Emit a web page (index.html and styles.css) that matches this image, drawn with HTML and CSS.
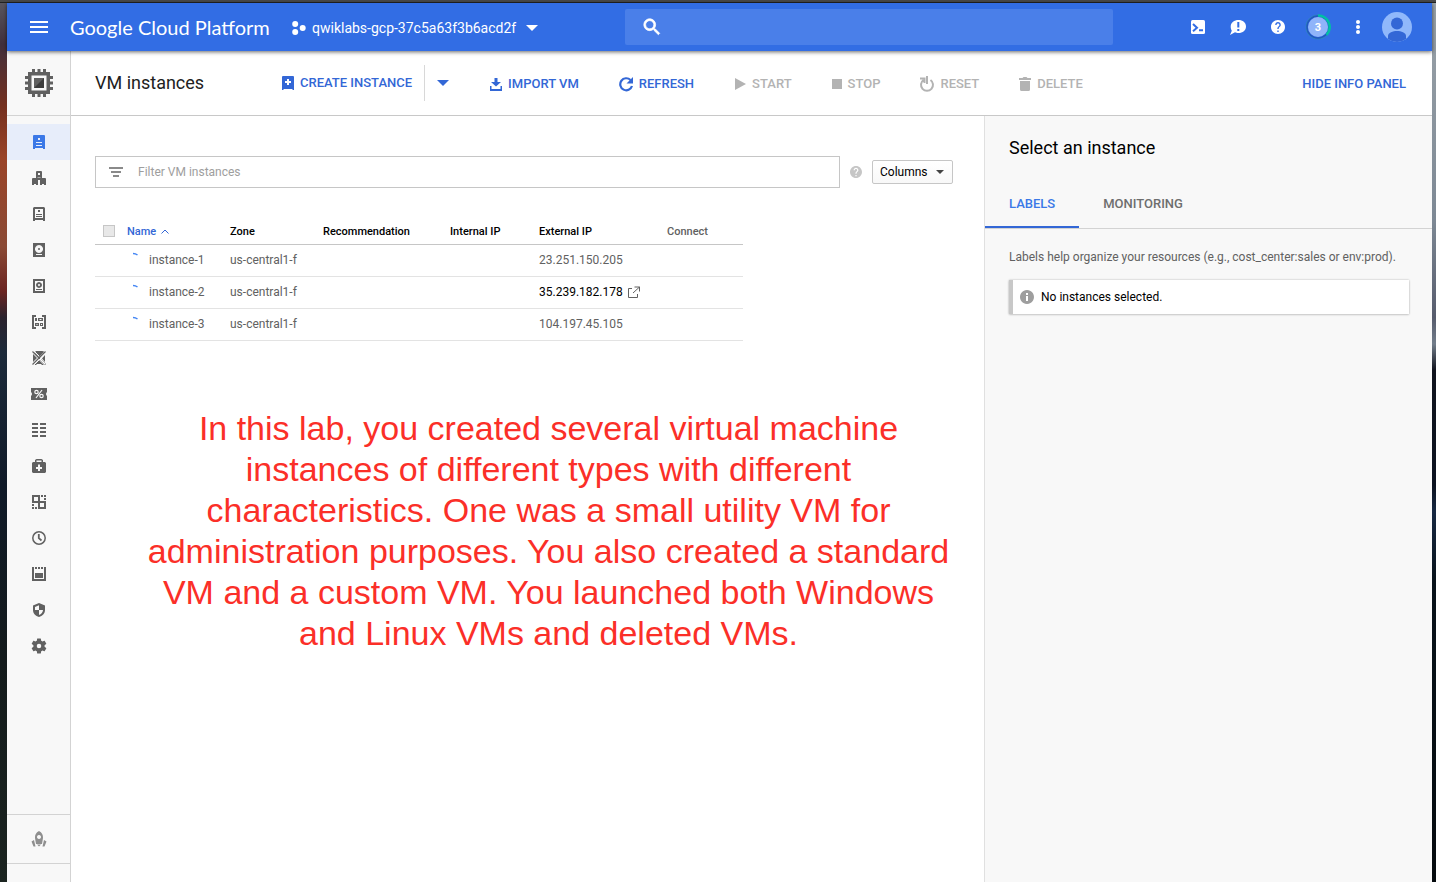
FILE: index.html
```html
<!DOCTYPE html>
<html lang="en">
<head>
<meta charset="utf-8">
<title>VM instances - Google Cloud Platform</title>
<link rel="stylesheet" href="styles.css">
</head>
<body>
<div class="window">
  <header class="topbar">
    <button class="icon-btn menu-btn" aria-label="Menu"><svg width="18" height="12" viewBox="0 0 18 12"><path d="M0 0h18v2H0zM0 5h18v2H0zM0 10h18v2H0z"/></svg></button>
    <a class="brand" href="#">Google Cloud Platform</a>
    <button class="project">
      <svg width="14" height="14" viewBox="0 0 14 14"><circle cx="3.2" cy="3" r="3"/><circle cx="3.2" cy="11" r="3"/><circle cx="10.7" cy="7" r="3"/></svg>
      <span>qwiklabs-gcp-37c5a63f3b6acd2f</span>
      <svg class="project-caret" width="12" height="6" viewBox="0 0 12 6"><path d="M0 0h12L6 6z"/></svg>
    </button>
    <label class="search" aria-label="Search">
      <svg width="20" height="20" viewBox="1 1 22 22"><path stroke="#fff" stroke-width=".8" d="M15.500 14h-.79l-.28-.27C15.410 12.590 16 11.110 16 9.500 16 5.910 13.090 3 9.500 3S3 5.910 3 9.500 5.910 16 9.500 16c1.610 0 3.090-.59 4.230-1.570l.27.28v.79l5 4.990L20.490 19l-4.990-5zm-6 0C7.010 14 5 11.990 5 9.500S7.010 5 9.500 5 14 7.010 14 9.500 11.990 14 9.500 14z"/></svg>
      <input type="text">
    </label>
    <div class="top-actions">
      <button class="icon-btn" aria-label="Cloud Shell"><svg width="14" height="14" viewBox="0 0 14 14"><rect width="14" height="14" rx="1.500"/><path class="cut" d="M2 4l4 3.800-4 3.500M8 10.200h4"/></svg></button>
      <button class="icon-btn" aria-label="Feedback"><svg width="16" height="16" viewBox="0 0 16 16"><path d="M8.500 1C12.700 1 16 3.600 16 7.500S12.700 14 8.500 14c-1.500 0-2.500-.3-3.500-.8L0 16l1.800-4.200C1 10.600.7 9.300.7 7.500.7 3.600 4.300 1 8.500 1z"/><path class="cut" d="M8.300 3v5.500M8.300 10v2"/></svg></button>
      <button class="icon-btn" aria-label="Help"><svg width="14" height="14" viewBox="2 2 20 20"><path d="M12 2C6.480 2 2 6.480 2 12s4.480 10 10 10 10-4.480 10-10S17.520 2 12 2zm1 17h-2v-2h2v2zm2.070-7.750l-.9.920C13.450 12.900 13 13.500 13 15h-2v-.5c0-1.100.45-2.100 1.170-2.830l1.240-1.260c.37-.36.59-.86.59-1.410 0-1.100-.9-2-2-2s-2 .9-2 2H8c0-2.210 1.790-4 4-4s4 1.790 4 4c0 .88-.36 1.680-.93 2.250z"/></svg></button>
      <button class="icon-btn notice" aria-label="Notifications"><svg width="26" height="26" viewBox="0 0 26 26"><circle cx="13" cy="13" r="12" fill="none" stroke="#2b8db8" stroke-width="1"/><circle cx="13" cy="13" r="11" fill="none" stroke="#2358bd" stroke-width="1.500"/><path d="M13 1.500a11.500 11.500 0 0 1 8.500 19.300" fill="none" stroke="#00bfa5" stroke-width="2.500"/><circle cx="13" cy="13" r="10" fill="#8fb4fa"/></svg><span>3</span></button>
      <button class="icon-btn" aria-label="More"><svg width="4" height="14" viewBox="0 0 4 14"><circle cx="2" cy="2" r="2"/><circle cx="2" cy="7" r="2"/><circle cx="2" cy="12" r="2"/></svg></button>
      <button class="icon-btn avatar" aria-label="Account"><svg width="30" height="30" viewBox="0 0 30 30"><circle cx="15" cy="15" r="15" fill="#90b8fb"/><circle cx="15" cy="11.500" r="6" fill="#3367d6"/><path d="M6 27v-3c0-3.500 5-5 9-5s9 1.500 9 5v3a15 15 0 0 1-18 0z" fill="#3367d6"/></svg></button>
    </div>
  </header>

  <div class="body">
    <aside class="sidebar">
      <a class="product" href="#" aria-label="Compute Engine"><svg width="30" height="30" viewBox="0 0 30 30"><path fill-rule="evenodd" d="M4 4h22v22H4zM7.500 7.500v15h15v-15z"/><path d="M8 1h3v4H8zM13.500 1h3v4h-3zM19 1h3v4h-3zM8 25h3v4H8zM13.500 25h3v4h-3zM19 25h3v4h-3zM1 8h4v3H1zM1 13.500h4v3H1zM1 19h4v3H1zM25 8h4v3h-4zM25 13.500h4v3h-4zM25 19h4v3h-4z"/><path d="M10 10h10v10H10z"/><path fill="#3d3d3d" d="M20 10v10H10z"/></svg></a>
      <nav class="nav">
        <a class="active" href="#" aria-label="VM instances"><svg width="16" height="16" viewBox="0 0 16 16"><path fill-rule="evenodd" d="M3 1h10q1 0 1 1v13h-2v-1H4v1H2V2q0-1 1-1zM7 4v2h2V4zM5 8v1h6V8zM5 11v1h6v-1z"/></svg></a>
        <a href="#" aria-label="Instance groups"><svg width="16" height="16" viewBox="0 0 16 16"><path fill-rule="evenodd" d="M6 1h4q1 0 1 1v6h3q1 0 1 1v6h-2v-1h-2v1H9v-5H7v5H5v-1H3v1H1V9q0-1 1-1h3V2q0-1 1-1zM7 3v2h2V3zM6.500 8h3V7.500h-3z"/></svg></a>
        <a href="#" aria-label="Instance templates"><svg width="16" height="16" viewBox="0 0 16 16"><path fill-rule="evenodd" d="M3 1h10l1 1v13h-2v-1H4v1H2V2zM4 3v9h8V3z"/><path d="M7 4h2v2H7zM5 8h6v1H5zM5 10h6v1H5z"/></svg></a>
        <a href="#" aria-label="Disks"><svg width="16" height="16" viewBox="0 0 16 16"><path fill-rule="evenodd" d="M2 1h12v14H2zM8 3a4 4 0 1 0 .01 0zM5 12v1h6v-1z"/><circle cx="8" cy="7" r="1"/></svg></a>
        <a href="#" aria-label="Snapshots"><svg width="16" height="16" viewBox="0 0 16 16"><path fill-rule="evenodd" d="M2 1h12v14H2zM4 3v10h8V3z"/><path fill-rule="evenodd" d="M8 4a3 3 0 1 1-.01 0zM8 6a1 1 0 1 0 .01 0z"/><path d="M5 11h6v1H5z"/></svg></a>
        <a href="#" aria-label="Images"><svg width="16" height="16" viewBox="0 0 16 16"><path d="M1 1h4v2H3v10h2v2H1zM11 1h4v14h-4v-2h2V3h-2z"/><path fill-rule="evenodd" d="M4 4h2v3H4zM7 4h5v3H7zM8.500 5v1h2V5zM4 9h4v3H4zM5.500 10v1h1v-1zM9 9h3v3H9zM10 10v1h1v-1z"/></svg></a>
        <a href="#" aria-label="TPUs"><svg width="16" height="16" viewBox="0 0 16 16"><path d="M5 1h6q2 0 2 1L8 7 3.500 2.500zM2 4l4 4-4 4zM14 5v7l-3-3.500zM3 15l5-5 5 5h-2l-1-1H6l-1 1z"/><path fill="none" stroke="#616161" stroke-width="1.200" d="M1.500 1.500l13 13M14.500 1.500l-13 13"/><path fill="none" stroke="#f8f8f8" d="M3 1l5 5M14 4L3 15M9 9l5 5"/></svg></a>
        <a href="#" aria-label="Committed use discounts"><svg width="16" height="12" viewBox="0 0 16 12"><path d="M0 0h16v4q-2 2 0 4v4H0V8q2-2 0-4z"/><g fill="none" stroke="#f8f8f8" stroke-width="1.200"><circle cx="5.500" cy="4" r="1.700"/><circle cx="10.500" cy="8" r="1.700"/><path d="M11 2L5 10"/></g></svg></a>
        <a href="#" aria-label="Metadata"><svg width="16" height="16" viewBox="0 0 16 16"><path d="M1 1h6v2H1zM9 1h6v2H9zM1 5h6v2H1zM9 5h6v2H9zM1 9h6v2H1zM9 9h6v2H9zM1 13h6v2H1zM9 13h6v2H9z"/></svg></a>
        <a href="#" aria-label="Health checks"><svg width="16" height="16" viewBox="0 0 16 16"><path fill-rule="evenodd" d="M4 4V2l1.500-1h5L12 2v2h2l1 1v9l-1 1H2l-1-1V5l1-1zM5.500 2.500V4h5V2.500zM7 6.500V9H5v2h2v2h2v-2h2V9H9V6.500z"/></svg></a>
        <a href="#" aria-label="Zones"><svg width="16" height="16" viewBox="0 0 16 16"><path fill-rule="evenodd" d="M1 1h8v6h6v8H7V9H1zM3 3v4h4V3zM9 9v4h4V9z"/><path d="M10 1h2v2h-2zM13 1h2v2h-2zM13 4h2v2h-2zM1 10h2v2H1zM1 13h2v2H1zM4 13h2v2H4z"/></svg></a>
        <a href="#" aria-label="Operations"><svg width="16" height="16" viewBox="0 0 16 16"><circle cx="8" cy="8" r="6.200" fill="none" stroke="#616161" stroke-width="1.500"/><path fill="none" stroke="#616161" stroke-width="1.800" d="M7.800 4v4.200l2.700 2.300"/></svg></a>
        <a href="#" aria-label="Quotas"><svg width="16" height="16" viewBox="0 0 16 16"><path d="M1 1h2v12h10V1h2v14H1zM4 1h2v2H4zM7 1h2v2H7zM10 1h2v2h-2zM4 7h8v5H4z"/></svg></a>
        <a href="#" aria-label="Security scans"><svg width="16" height="16" viewBox="0 0 16 16"><path fill-rule="evenodd" d="M8 1l6 2.500V8c0 3.500-2.600 6-6 7-3.400-1-6-3.500-6-7V3.500zM8 3.200L4 5v3h4v5c2.300-.8 4-2.800 4-5H8z"/></svg></a>
        <a href="#" aria-label="Settings"><svg width="18" height="18" viewBox="0 0 24 24"><path d="M19.430 12.980c.04-.32.07-.64.07-.98s-.03-.66-.07-.98l2.110-1.650c.19-.15.24-.42.12-.64l-2-3.460c-.12-.22-.39-.3-.61-.22l-2.490 1c-.52-.4-1.080-.73-1.690-.98l-.38-2.650A.488.488 0 0 0 14 2h-4c-.25 0-.46.18-.49.42l-.38 2.650c-.61.25-1.170.59-1.690.98l-2.490-1c-.23-.09-.49 0-.61.22l-2 3.460c-.13.22-.07.49.12.64l2.110 1.650c-.04.32-.07.65-.07.98s.03.66.07.98l-2.110 1.650c-.19.15-.24.42-.12.64l2 3.460c.12.22.39.3.61.22l2.490-1c.52.4 1.080.73 1.690.98l.38 2.650c.03.24.24.42.49.42h4c.25 0 .46-.18.49-.42l.38-2.650c.61-.25 1.170-.59 1.690-.98l2.490 1c.23.09.49 0 .61-.22l2-3.460c.12-.22.07-.49-.12-.64l-2.110-1.650zM12 15a3 3 0 1 1 0-6 3 3 0 0 1 0 6z"/></svg></a>
      </nav>
      <a class="launcher" href="#" aria-label="Marketplace"><svg width="16" height="16" viewBox="0 0 16 16"><path fill-rule="evenodd" d="M8 0c3 1.500 4.200 4 4 7l-1 6H5L4 7c-.2-3 1-5.500 4-7zM8 4a2 2 0 1 0 .01 0z"/><path d="M6 13.500h4l-2 2zM3 9l1.500 6.500h-2L.5 10.500zM13 9l-1.500 6.500h2l2-5z"/></svg></a>
      <div class="side-foot"></div>
    </aside>

    <div class="page">
      <div class="toolbar">
        <h1>VM instances</h1>
        <div class="split">
          <button class="action"><svg width="14" height="14" viewBox="0 0 14 14"><path fill-rule="evenodd" d="M2 0h10q1 0 1 1v13h-1l-1-1H3l-1 1H1V1q0-1 1-1zM6 3v2H4v2h2v2h2V7h2V5H8V3z"/></svg>CREATE INSTANCE</button>
          <button class="more" aria-label="More create options"><svg width="12" height="6" viewBox="0 0 12 6"><path d="M0 0h12L6 6z"/></svg></button>
        </div>
        <div class="actions">
          <button class="action"><svg width="14" height="14" viewBox="0 0 14 14"><path d="M5.500 1h3v4H12L7 9.500 2 5h3.500zM1 9h1.500v3h9V9H13v5H1z"/></svg>IMPORT VM</button>
          <button class="action"><svg width="16" height="16" viewBox="0 0 16 16"><path fill="none" stroke="#3367d6" stroke-width="2.200" d="M12.500 4A6 6 0 1 0 14 10"/><path d="M15 1v6.500H8.500z"/></svg>REFRESH</button>
          <button class="action" disabled><svg width="14" height="14" viewBox="0 0 14 14"><path d="M2 1l11 6-11 6z"/></svg>START</button>
          <button class="action" disabled><svg width="12" height="12" viewBox="0 0 12 12"><path d="M1 1h10v10H1z"/></svg>STOP</button>
          <button class="action" disabled><svg width="16" height="16" viewBox="0 0 16 16"><path fill="none" stroke="#b3b3b3" stroke-width="2" d="M4.500 4A6 6 0 1 0 11.500 4M8 0v8M1 2.500h4.500V7"/></svg>RESET</button>
          <button class="action" disabled><svg width="14" height="14" viewBox="0 0 14 14"><path d="M1 1h3.500l1-1h3l1 1H13v2H1zM2 4h10v8.500q0 1.500-1.500 1.500h-7Q2 14 2 12.500z"/></svg>DELETE</button>
        </div>
        <button class="action hide-panel">HIDE INFO PANEL</button>
      </div>

      <div class="content">
        <main>
          <div class="filter-row">
            <label class="filter" aria-label="Filter">
              <svg width="14" height="10" viewBox="0 0 14 10"><path d="M0 0h14v2H0zM2 4h10v2H2zM4 8h6v2H4z"/></svg>
              <input type="text" placeholder="Filter VM instances">
            </label>
            <svg class="hint" width="12" height="12" viewBox="2 2 20 20"><path d="M12 2C6.480 2 2 6.480 2 12s4.480 10 10 10 10-4.480 10-10S17.520 2 12 2zm1 17h-2v-2h2v2zm2.070-7.750l-.9.920C13.450 12.900 13 13.500 13 15h-2v-.5c0-1.100.45-2.100 1.170-2.830l1.240-1.260c.37-.36.59-.86.59-1.410 0-1.100-.9-2-2-2s-2 .9-2 2H8c0-2.210 1.790-4 4-4s4 1.790 4 4c0 .88-.36 1.680-.93 2.250z"/></svg>
            <button class="columns">Columns<svg width="8" height="4" viewBox="0 0 8 4"><path d="M0 0h8L4 4z"/></svg></button>
          </div>

          <table class="instances">
            <colgroup><col class="c-check"><col class="c-name"><col class="c-zone"><col class="c-rec"><col class="c-int"><col class="c-ext"><col class="c-con"></colgroup>
            <thead>
              <tr><th class="check"><input type="checkbox" aria-label="Select all" disabled></th><th class="sorted">Name<svg width="8" height="5" viewBox="0 0 8 5"><path d="M.5 4.500L4 1l3.500 3.500"/></svg></th><th>Zone</th><th>Recommendation</th><th>Internal IP</th><th>External IP</th><th class="muted">Connect</th></tr>
            </thead>
            <tbody>
              <tr><td></td><td><span class="name"><svg width="8" height="16" viewBox="0 0 8 16"><path d="M0 1.500q2.500 0 4.500 1.500"/></svg>instance-1</span></td><td>us-central1-f</td><td></td><td></td><td>23.251.150.205</td><td></td></tr>
              <tr><td></td><td><span class="name"><svg width="8" height="16" viewBox="0 0 8 16"><path d="M0 1.500q2.500 0 4.500 1.500"/></svg>instance-2</span></td><td>us-central1-f</td><td></td><td></td><td><a class="ip" href="#">35.239.182.178<svg width="12" height="12" viewBox="0 0 12 12"><path d="M4 2.500H.5v9h9V8M6.500 1h5v4.500M11.500 1L5 7"/></svg></a></td><td></td></tr>
              <tr><td></td><td><span class="name"><svg width="8" height="16" viewBox="0 0 8 16"><path d="M0 1.500q2.500 0 4.500 1.500"/></svg>instance-3</span></td><td>us-central1-f</td><td></td><td></td><td>104.197.45.105</td><td></td></tr>
            </tbody>
          </table>

          <p class="note">In this lab, you created several virtual machine<br>instances of different types with different<br>characteristics. One was a small utility VM for<br>administration purposes. You also created a standard<br>VM and a custom VM. You launched both Windows<br>and Linux VMs and deleted VMs.</p>
        </main>

        <aside class="info">
          <h2>Select an instance</h2>
          <div class="tabs" role="tablist">
            <button class="selected" role="tab" aria-selected="true">LABELS</button>
            <button role="tab" aria-selected="false">MONITORING</button>
          </div>
          <div class="info-body">
            <p>Labels help organize your resources (e.g., cost_center:sales or env:prod).</p>
            <div class="notice-box"><svg width="14" height="14" viewBox="0 0 14 14"><path fill-rule="evenodd" d="M7 0a7 7 0 1 1-.01 0zM6 3v2h2V3zM6 6v5h2V6z"/></svg>No instances selected.</div>
          </div>
        </aside>
      </div>
    </div>
  </div>
</div>
</body>
</html>
```

FILE: styles.css
```css
* { box-sizing: border-box; }
html, body { height: 100%; }
body {
  margin: 0;
  padding: 3px 4px 0 7px;
  font: 12px/16px Roboto, "Liberation Sans", sans-serif;
  color: #000;
  background:
    linear-gradient(#484848 0 2px, #222 2px 3px) top / 100% 3px no-repeat,
    linear-gradient(#5b5962, #41303c 5%, #74301f 12%, #9a4428 18%, #8a4a35 28%, #6b2421 33%, #2a222d 36%, #1c2a3a 40%, #101a28 55%, #141b1c 75%, #1b2420) left / 7px 100% no-repeat,
    linear-gradient(#9ba3a9, #7d8894 25%, #565b6c 36%, #727d8a 39%, #10131d 42%, #0c1220 55%, #172842 58%, #08121a 66%, #050a0e) right / 4px 100% no-repeat;
}
svg { display: block; flex: none; fill: currentColor; }
button, input { font: inherit; color: inherit; }
button { padding: 0; border: 0; background: none; cursor: pointer; }
a { color: inherit; text-decoration: none; }
input { min-width: 0; border: 0; outline: 0; background: none; }

.window { height: 100%; display: flex; flex-direction: column; background: #fff; }

.topbar {
  position: relative;
  flex: none;
  height: 48px;
  display: flex;
  align-items: center;
  color: #fff;
  background: #326de4;
  box-shadow: 0 1px 4px rgba(0, 0, 0, .6);
}
.icon-btn { width: 40px; height: 40px; display: grid; place-items: center; }
.menu-btn { width: 63px; }
.brand { width: 222px; white-space: nowrap; font: 20px/24px Lato, sans-serif; }
.project { width: 333px; display: flex; align-items: center; gap: 6px; font-size: 14px; padding-top: 2px; }
.project-caret { margin-left: 4px; }
.search {
  flex: 1;
  height: 36px;
  padding-left: 17px;
  display: flex;
  align-items: center;
  border-radius: 2px;
  background: #4a7fe9;
}
.search input { flex: 1; }
.top-actions { margin-left: 65px; margin-right: 16px; display: flex; align-items: center; }
.cut { fill: none; stroke: #326de4; stroke-width: 2; }
.notice > * { grid-area: 1 / 1; }
.notice span { padding-top: 2px; font-size: 11px; font-weight: 700; }
.avatar { width: 38px; }

.body { flex: 1; min-height: 0; display: flex; }
.sidebar {
  flex: none;
  width: 64px;
  display: flex;
  flex-direction: column;
  border-right: 1px solid #d3d3d3;
  color: #616161;
  background: #f8f8f8;
}
.product { height: 65px; display: grid; place-items: center; border-bottom: 1px solid #d3d3d3; }
.nav { flex: 1; padding-top: 8px; }
.nav a { height: 36px; display: grid; place-items: center; }
.nav .active { color: #3b78e7; background: #e7edfa; }
.launcher { height: 50px; display: grid; place-items: center; color: #8f8f8f; border: solid #d3d3d3; border-width: 1px 0; }
.side-foot { height: 18px; }

.page { flex: 1; min-width: 0; display: flex; flex-direction: column; }
.toolbar {
  flex: none;
  height: 65px;
  padding: 0 26px 0 24px;
  display: flex;
  align-items: center;
  border-bottom: 1px solid #c8c8c8;
}
h1, h2 { margin: 0; font-size: 18px; line-height: 24px; font-weight: 400; }
h1 { width: 186px; color: #212121; }
.action {
  display: flex;
  align-items: center;
  gap: 5px;
  color: #3367d6;
  font-size: 13px;
  font-weight: 500;
  white-space: nowrap;
}
.action:disabled { color: #b3b3b3; cursor: default; }
.split { display: flex; align-items: center; color: #3367d6; }
.split .action { height: 36px; padding-right: 12px; border-right: 1px solid #d8d8d8; }
.more { width: 36px; height: 36px; display: grid; place-items: center; }
.actions { margin-left: 28px; display: flex; gap: 39px; }
.actions, .hide-panel { padding-top: 2px; }
.hide-panel { margin-left: auto; }

.content { flex: 1; min-height: 0; display: flex; }
main { flex: 1; min-width: 0; padding: 40px 31px 0 24px; }
.filter-row { display: flex; align-items: center; }
.filter {
  flex: 1;
  height: 32px;
  padding-left: 13px;
  display: flex;
  align-items: center;
  gap: 15px;
  border: 1px solid #c6c6c6;
  color: #8a8a8a;
}
.filter input { flex: 1; padding: 0; }
.filter input::placeholder { color: #9e9e9e; opacity: 1; }
.hint { margin: 0 10px; color: #c6c6c6; }
.columns {
  width: 81px;
  height: 24px;
  padding: 0 8px 0 7px;
  display: flex;
  align-items: center;
  justify-content: space-between;
  border: 1px solid #c6c6c6;
  border-radius: 2px;
  background: linear-gradient(#fff, #f8f8f8);
}
.columns svg { fill: #444; }

.instances { width: 648px; margin-top: 30px; table-layout: fixed; border-collapse: collapse; color: #616161; }
.c-check { width: 32px; }
.c-name { width: 103px; }
.c-zone { width: 93px; }
.c-rec { width: 127px; }
.c-int { width: 89px; }
.c-ext { width: 128px; }
.instances th, .instances td { padding: 0; text-align: left; white-space: nowrap; }
.instances th { height: 26px; padding-top: 2px; font-size: 11px; font-weight: 500; color: #000; border-bottom: 1px solid #c6c6c6; }
.instances td { height: 32px; border-bottom: 1px solid #e3e3e3; }
.instances .check { padding: 0 0 0 8px; }
.check input { appearance: none; display: block; width: 12px; height: 12px; margin: 0; border: 1px solid #c6c6c6; background: #e8e8e8; }
.instances .sorted { color: #3367d6; }
.sorted svg { display: inline-block; margin-left: 5px; vertical-align: 1px; fill: none; stroke: currentColor; }
.instances .muted { color: #616161; }
.name { display: flex; gap: 8px; padding-left: 6px; }
.name svg { fill: none; stroke: #4285f4; stroke-width: 1.5; }
.ip { display: flex; align-items: center; gap: 5px; color: #000; }
.ip svg { fill: none; stroke: #616161; }

.note {
  margin: 67px 0 0 49px;
  text-align: center;
  white-space: nowrap;
  font: 34px/41px "Liberation Sans", Helvetica, Arial, sans-serif;
  color: #fb2f28;
}

.info { flex: none; width: 448px; border-left: 1px solid #e0e0e0; background: #f8f8f8; }
.info h2 { padding: 20px 24px 0; }
.tabs { height: 49px; margin-top: 20px; display: flex; border-bottom: 1px solid #d3d3d3; }
.tabs button { padding: 2px 24px 0; font-size: 13px; font-weight: 500; color: #6e6e6e; border-bottom: 2px solid transparent; }
.tabs .selected { color: #3b78e7; border-bottom-color: #3367d6; }
.info-body { padding: 20px 23px 0 24px; }
.info-body p { margin: 0 0 15px; color: #616161; }
.notice-box {
  height: 34px;
  padding-left: 7px;
  display: flex;
  align-items: center;
  gap: 7px;
  border-left: 4px solid #c8c8c8;
  background: #fff;
  box-shadow: 0 0 2px rgba(0, 0, 0, .25), 0 1px 2px rgba(0, 0, 0, .12);
}
.notice-box svg { color: #9e9e9e; }
```
